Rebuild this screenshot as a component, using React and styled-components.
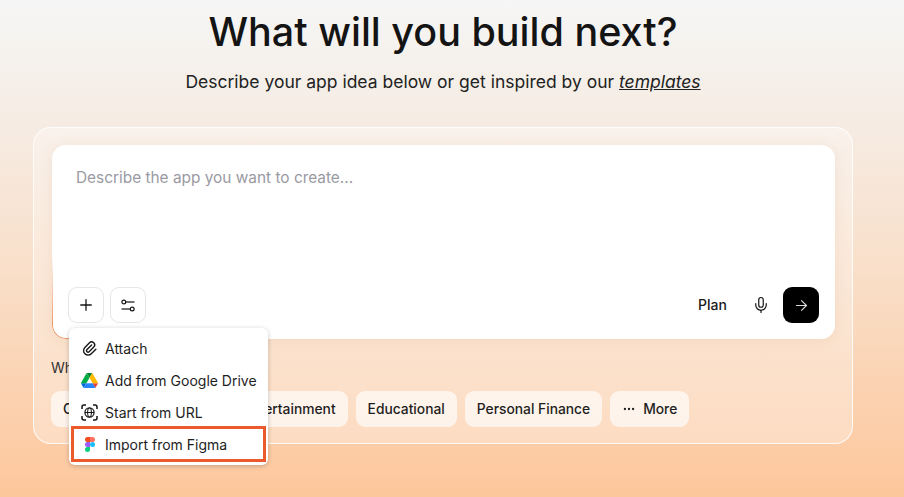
import React from "react";
import styled, { createGlobalStyle } from "styled-components";
import { ArrowRight, Ellipsis, Mic, Plus } from "lucide-react";

const GlobalStyle = createGlobalStyle`
  html, body {
    margin: 0;
    padding: 0;
    height: 100%;
    overflow: hidden;
  }
  body {
    font-family: "Inter", "Liberation Sans", sans-serif;
    color: #141414;
  }
`;

const categories = ["Entertainment", "Educational", "Personal Finance"];

const ClipIcon = () => (
  <svg width="17" height="17" viewBox="0 0 24 24" fill="none" stroke="#141414" strokeWidth="1.9" strokeLinecap="round" strokeLinejoin="round">
    <path d="M15 7l-6.5 6.5a1.5 1.5 0 0 0 3 3l6.5 -6.5a3 3 0 0 0 -6 -6l-6.5 6.5a4.5 4.5 0 0 0 9 9l6.5 -6.5" />
  </svg>
);

const DriveIcon = () => (
  <svg width="17" height="15" viewBox="0 0 87.3 78">
    <path d="M6.6 66.85l3.85 6.65c.8 1.4 1.95 2.5 3.3 3.3L27.5 53H0c0 1.55.4 3.1 1.2 4.5z" fill="#0066da" />
    <path d="M43.65 25L29.9 1.2c-1.35.8-2.5 1.9-3.3 3.3L1.2 48.5A9 9 0 0 0 0 53h27.5z" fill="#00ac47" />
    <path d="M73.55 76.8c1.35-.8 2.5-1.9 3.3-3.3l1.6-2.75 7.65-13.25c.8-1.4 1.2-2.95 1.2-4.5H59.8l5.85 11.5z" fill="#ea4335" />
    <path d="M43.65 25L57.4 1.2C56.05.4 54.5 0 52.9 0H34.4c-1.6 0-3.15.45-4.5 1.2z" fill="#00832d" />
    <path d="M59.8 53H27.5L13.75 76.8c1.35.8 2.9 1.2 4.5 1.2h50.8c1.6 0 3.15-.45 4.5-1.2z" fill="#2684fc" />
    <path d="M73.4 26.5L60.7 4.5c-.8-1.4-1.95-2.5-3.3-3.3L43.65 25 59.8 53h27.45c0-1.55-.4-3.1-1.2-4.5z" fill="#ffba00" />
  </svg>
);

const UrlIcon = () => (
  <svg width="17" height="17" viewBox="0 0 17 17" fill="none" stroke="#141414">
    <path d="M1 5V3a2 2 0 0 1 2-2h2M12 1h2a2 2 0 0 1 2 2v2M16 12v2a2 2 0 0 1-2 2h-2M5 16H3a2 2 0 0 1-2-2v-2" strokeWidth="1.5" />
    <circle cx="8.5" cy="8.5" r="4.6" strokeWidth="1.2" />
    <ellipse cx="8.5" cy="8.5" rx="2" ry="4.6" strokeWidth="1" />
    <path d="M4 8.5h9" strokeWidth="1" />
  </svg>
);

const FigmaIcon = () => (
  <svg width="10" height="15" viewBox="0 0 10 15">
    <path d="M0 2.5A2.5 2.5 0 0 1 2.5 0H5v5H2.5A2.5 2.5 0 0 1 0 2.5z" fill="#f24e1e" />
    <path d="M5 0h2.5a2.5 2.5 0 0 1 0 5H5z" fill="#ff7262" />
    <path d="M0 7.5A2.5 2.5 0 0 1 2.5 5H5v5H2.5A2.5 2.5 0 0 1 0 7.5z" fill="#a259ff" />
    <circle cx="7.5" cy="7.5" r="2.5" fill="#1abcfe" />
    <path d="M0 12.5A2.5 2.5 0 0 1 2.5 10H5v2.5a2.5 2.5 0 0 1-5 0z" fill="#0acf83" />
  </svg>
);

const SlidersIcon = () => (
  <svg width="14" height="13" viewBox="0 0 14 13" fill="none" stroke="#141414" strokeWidth="1.2">
    <circle cx="2.8" cy="3" r="1.9" />
    <path d="M4.7 3h8.8" />
    <circle cx="11.2" cy="10" r="1.9" />
    <path d="M.5 10h8.8" />
  </svg>
);

const App = () => {
  return (
    <Page>
      <GlobalStyle />
      <Title>What will you build next?</Title>
      <Subtitle>
        Describe your app idea below or get inspired by our <em>templates</em>
      </Subtitle>
      <Panel>
        <PromptCard>
          <Placeholder>Describe the app you want to create...</Placeholder>
          <PromptFooter>
            <FooterGroup>
              <SquareButton>
                <Plus size={18} strokeWidth={1.7} />
              </SquareButton>
              <SquareButton>
                <SlidersIcon />
              </SquareButton>
            </FooterGroup>
            <FooterGroup>
              <PlanLabel>Plan</PlanLabel>
              <MicWrap>
                <Mic size={18} strokeWidth={1.6} />
              </MicWrap>
              <SendButton>
                <ArrowRight size={17} strokeWidth={1.5} />
              </SendButton>
            </FooterGroup>
          </PromptFooter>
          <Menu>
            <MenuItem>
              <MenuIcon>
                <ClipIcon />
              </MenuIcon>
              Attach
            </MenuItem>
            <MenuItem>
              <MenuIcon>
                <DriveIcon />
              </MenuIcon>
              Add from Google Drive
            </MenuItem>
            <MenuItem>
              <MenuIcon>
                <UrlIcon />
              </MenuIcon>
              Start from URL
            </MenuItem>
            <MenuItem $highlighted>
              <MenuIcon>
                <FigmaIcon />
              </MenuIcon>
              Import from Figma
            </MenuItem>
          </Menu>
        </PromptCard>
        <ChipsLabel>What are you building?</ChipsLabel>
        <ChipRow>
          <Chip $first>Customer Management</Chip>
          {categories.map((name) => (
            <Chip key={name}>{name}</Chip>
          ))}
          <Chip>
            <Ellipsis size={14} strokeWidth={2} />
            More
          </Chip>
        </ChipRow>
      </Panel>
    </Page>
  );
};

const Page = styled.div`
  width: 904px;
  height: 497px;
  overflow: hidden;
  box-sizing: border-box;
  padding: 9px 51px 0 33px;
  display: flex;
  flex-direction: column;
  align-items: center;
  background: linear-gradient(180deg, #f6f6f6 0px, #f5f2ee 50px, #f6ebe2 130px, #f9dfc9 270px, #fdc79c 497px);
`;

const Title = styled.h1`
  margin: 0;
  font-size: 39.5px;
  line-height: 46px;
  font-weight: 500;
  color: #141414;
`;

const Subtitle = styled.p`
  margin: 16px 0 0;
  font-size: 17.5px;
  line-height: 22px;
  color: #222;

  em {
    text-decoration: underline;
    font-style: italic;
  }
`;

const Panel = styled.section`
  margin-top: 34px;
  width: 820px;
  height: 317px;
  box-sizing: border-box;
  padding: 17px 17px 16px 18px;
  border: 1px solid rgba(255, 255, 255, 0.85);
  border-radius: 18px;
  background: rgba(255, 255, 255, 0.3);
  display: flex;
  flex-direction: column;
`;

const PromptCard = styled.div`
  position: relative;
  height: 194px;
  box-sizing: border-box;
  padding: 23px 16px 16px 16px;
  background: #fff;
  border-radius: 14px;
  box-shadow: 0 2px 14px rgba(190, 130, 80, 0.12);
  display: flex;
  flex-direction: column;
  justify-content: space-between;

  &::before {
    content: "";
    position: absolute;
    inset: 0;
    border-radius: 14px;
    border-left: 1px solid #e8824a;
    border-bottom: 1px solid #e8824a;
    -webkit-mask-image: linear-gradient(45deg, #000 0, transparent 60px);
    mask-image: linear-gradient(45deg, #000 0, transparent 60px);
    pointer-events: none;
  }
`;

const Placeholder = styled.div`
  padding-left: 8px;
  font-size: 15.4px;
  line-height: 20px;
  color: #9a9aa2;
`;

const PromptFooter = styled.div`
  display: flex;
  align-items: center;
  justify-content: space-between;
`;

const FooterGroup = styled.div`
  display: flex;
  align-items: center;
  gap: 6px;
`;

const SquareButton = styled.button`
  width: 36px;
  height: 36px;
  padding: 0;
  display: flex;
  align-items: center;
  justify-content: center;
  background: #fff;
  border: 1px solid #e6e6e6;
  border-radius: 9px;
  color: #141414;
`;

const PlanLabel = styled.span`
  margin-top: -2px;
  margin-right: 19px;
  font-size: 14px;
  font-weight: 500;
  color: #1a1a1a;
`;

const MicWrap = styled.span`
  display: flex;
  margin-right: 7px;
  color: #141414;
`;

const SendButton = styled.button`
  width: 36px;
  height: 36px;
  padding: 0;
  display: flex;
  align-items: center;
  justify-content: center;
  background: #000;
  border: 0;
  border-radius: 9px;
  color: #ddd;
`;

const Menu = styled.div`
  position: absolute;
  left: 17px;
  top: 183px;
  z-index: 2;
  width: 199px;
  height: 137px;
  box-sizing: border-box;
  padding: 4px 2px 3px;
  background: #fff;
  border-radius: 6px;
  box-shadow: 0 1px 5px rgba(0, 0, 0, 0.22);
  display: flex;
  flex-direction: column;
`;

const MenuItem = styled.div`
  flex: none;
  height: ${(p) => (p.$highlighted ? "36px" : "32px")};
  margin-top: ${(p) => (p.$highlighted ? "-2px" : "0")};
  box-sizing: border-box;
  display: flex;
  align-items: center;
  gap: 7px;
  padding-left: ${(p) => (p.$highlighted ? "7px" : "10px")};
  font-size: 14px;
  color: #1e1e1e;
  border: ${(p) => (p.$highlighted ? "3px solid #ea5a2a" : "none")};
`;

const MenuIcon = styled.span`
  width: 17px;
  display: flex;
  align-items: center;
  justify-content: center;
`;

const ChipsLabel = styled.div`
  margin-top: 20px;
  margin-left: -1px;
  font-size: 14px;
  line-height: 18px;
  color: #333;
`;

const ChipRow = styled.div`
  margin-top: 14px;
  margin-left: -1px;
  display: flex;
  gap: 8px;
`;

const Chip = styled.div`
  height: 36px;
  box-sizing: border-box;
  padding: 0 12px;
  display: flex;
  align-items: center;
  gap: 7px;
  font-size: 13.8px;
  font-weight: 500;
  white-space: nowrap;
  color: #1e1e1e;
  background: rgba(255, 255, 255, 0.65);
  border-radius: 9px;
  ${(p) => p.$first && "width: 172px;"}
`;

export default App;
